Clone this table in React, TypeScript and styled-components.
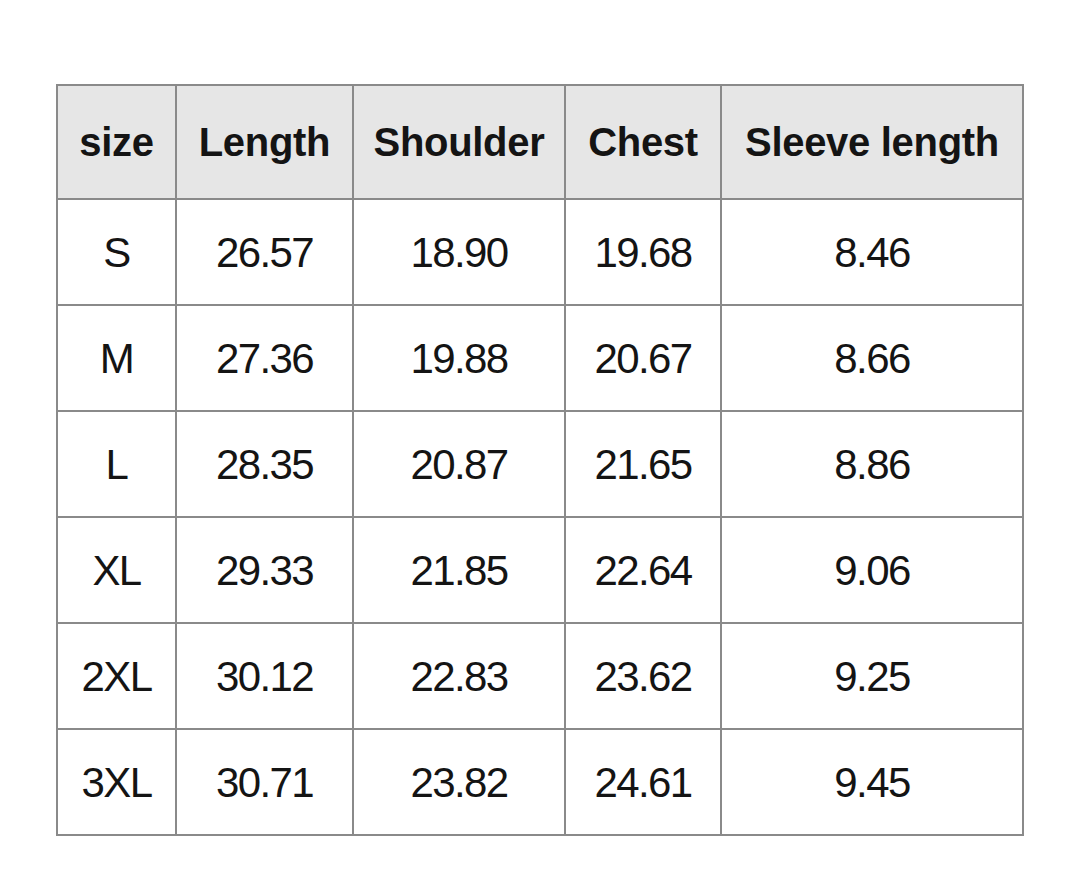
import React from "react";
import styled, { createGlobalStyle } from "styled-components";

const GlobalStyle = createGlobalStyle`
  body {
    margin: 0;
    background: #ffffff;
    font-family: "Liberation Sans", Arial, sans-serif;
    color: #141414;
  }
`;

const Page = styled.div`
  padding: 84px 0 0 56px;
`;

const Table = styled.table`
  border-collapse: collapse;
  table-layout: fixed;
  width: 966px;
  border: 2px solid #8a8a8a;
`;

const HeadCell = styled.th`
  background: #e6e6e6;
  border: 2px solid #8a8a8a;
  height: 112px;
  padding: 0;
  font-size: 40px;
  font-weight: 700;
  letter-spacing: -0.3px;
  text-align: center;
  vertical-align: middle;
`;

const Cell = styled.td`
  border: 2px solid #8a8a8a;
  height: 102px;
  padding: 2px 0 0;
  font-size: 42px;
  font-weight: 400;
  letter-spacing: -1.6px;
  text-align: center;
  vertical-align: middle;
`;

const columns = [
  { label: "size", width: 119 },
  { label: "Length", width: 177 },
  { label: "Shoulder", width: 212 },
  { label: "Chest", width: 156 },
  { label: "Sleeve length", width: 302 },
];

const rows = [
  ["S", "26.57", "18.90", "19.68", "8.46"],
  ["M", "27.36", "19.88", "20.67", "8.66"],
  ["L", "28.35", "20.87", "21.65", "8.86"],
  ["XL", "29.33", "21.85", "22.64", "9.06"],
  ["2XL", "30.12", "22.83", "23.62", "9.25"],
  ["3XL", "30.71", "23.82", "24.61", "9.45"],
];

export default function App() {
  return (
    <>
      <GlobalStyle />
      <Page>
        <Table>
          <colgroup>
            {columns.map((c) => (
              <col key={c.label} style={{ width: c.width }} />
            ))}
          </colgroup>
          <thead>
            <tr>
              {columns.map((c) => (
                <HeadCell key={c.label}>{c.label}</HeadCell>
              ))}
            </tr>
          </thead>
          <tbody>
            {rows.map((r) => (
              <tr key={r[0]}>
                {r.map((v, i) => (
                  <Cell key={i}>{v}</Cell>
                ))}
              </tr>
            ))}
          </tbody>
        </Table>
      </Page>
    </>
  );
}
